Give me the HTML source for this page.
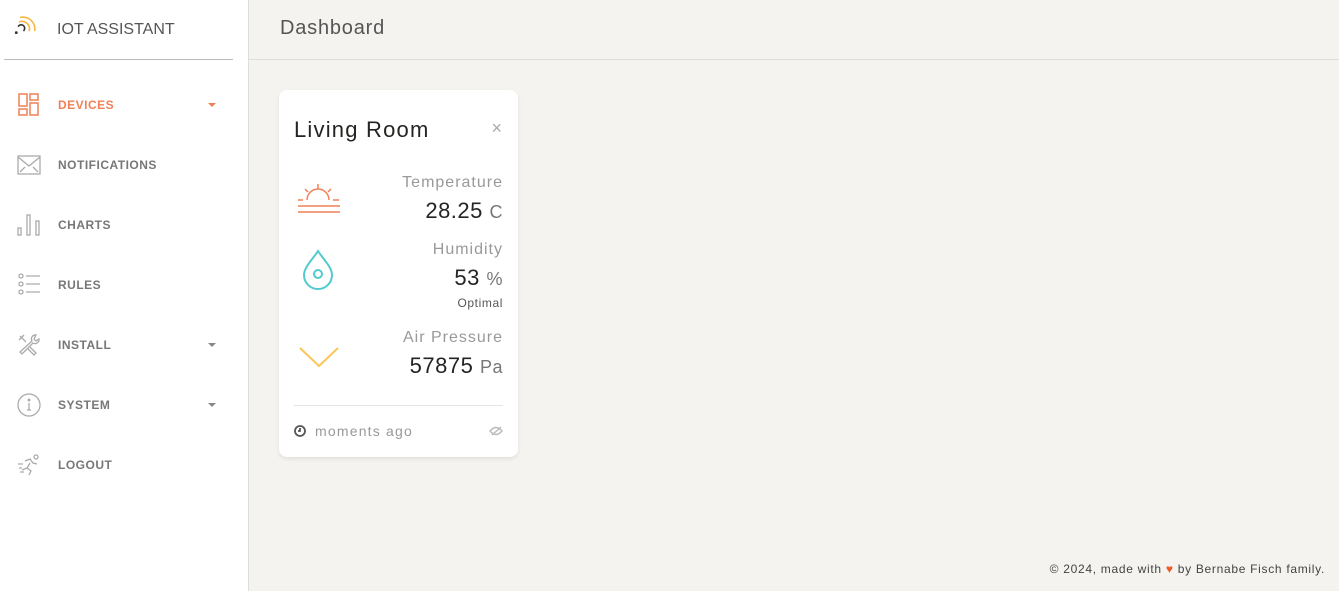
<!DOCTYPE html>
<html><head><meta charset="utf-8"><style>
*{margin:0;padding:0;box-sizing:border-box}
body{width:1339px;height:591px;background:#f4f3ef;font-family:"Liberation Sans",sans-serif;position:relative;overflow:hidden}
.side{position:absolute;left:0;top:0;width:249px;height:591px;background:#fff;border-right:1px solid #ddd}
.logo{position:absolute;left:57px;top:21px;font-size:16px;color:#555}
.hr{position:absolute;left:4px;top:59px;width:229px;height:1px;background:#bbb}
.item{position:absolute;left:16px;height:30px;width:220px}
.item svg{position:absolute;left:0;top:0}
.item span{position:absolute;left:42px;top:6px;font-size:12px;font-weight:bold;color:#777;letter-spacing:.5px}
.item .car{position:absolute;left:192px;top:11px;width:0;height:0;border-left:4px solid transparent;border-right:4px solid transparent;border-top:4px solid #888}
.top{position:absolute;left:249px;top:0;right:0;height:60px;border-bottom:1px solid #ddd}
.top h1{position:absolute;left:31px;top:17px;font-size:20px;font-weight:normal;color:#555;letter-spacing:.8px}
.card{position:absolute;left:279px;top:90px;width:239px;height:367px;background:#fff;border-radius:8px;box-shadow:0 2px 4px rgba(0,0,0,.08)}
.r{position:absolute;right:15px;text-align:right}
.lbl{font-size:16px;color:#999;letter-spacing:1px}
.val{font-size:22px;color:#252422;letter-spacing:.5px}
.val small{font-size:18px;color:#777}
.foot{position:absolute;right:14px;top:562px;font-size:12px;color:#444;letter-spacing:.7px}
</style></head><body>
<div class="side">
<svg style="position:absolute;left:13px;top:13px" width="24" height="24" viewBox="0 0 22 22" fill="none" stroke-linecap="round"><path d="M7 4a11 11 0 0 1 13 12" stroke="#f3bb45" stroke-width="1.5"/><path d="M6 8a7 7 0 0 1 9 8" stroke="#f3bb45" stroke-width="1.5"/><path d="M5 12a3 3 0 0 1 5 4" stroke="#333" stroke-width="1.5"/><circle cx="3" cy="18" r="1.3" fill="#333"/></svg>
<div class="logo">IOT ASSISTANT</div>
<div class="hr"></div>
<div class="item" style="top:92px"><svg width="26" height="26" fill="none" stroke="#ef8157" stroke-width="1.5"><rect x="3" y="2" width="8" height="12"/><rect x="14" y="2" width="8" height="6"/><rect x="3" y="17" width="8" height="6"/><rect x="14" y="11" width="8" height="12"/></svg><span style="color:#ef8157">DEVICES</span><i class="car" style="border-top-color:#ef8157"></i></div>
<div class="item" style="top:152px"><svg width="26" height="26" fill="none" stroke="#aaa" stroke-width="1.3"><rect x="2" y="4" width="22" height="18"/><path d="M2 5l11 9 11-9M4 20l5-5M22 20l-5-5"/></svg><span>NOTIFICATIONS</span></div>
<div class="item" style="top:212px"><svg width="26" height="26" fill="none" stroke="#aaa" stroke-width="1.3"><rect x="2" y="16" width="3" height="7"/><rect x="11" y="3" width="3" height="20"/><rect x="20" y="9" width="3" height="14"/></svg><span>CHARTS</span></div>
<div class="item" style="top:272px"><svg width="26" height="26" fill="none" stroke="#aaa" stroke-width="1.3"><circle cx="5" cy="4" r="2"/><circle cx="5" cy="12" r="2"/><circle cx="5" cy="20" r="2"/><path d="M10 4h14M10 12h14M10 20h14"/></svg><span>RULES</span></div>
<div class="item" style="top:332px"><svg width="26" height="26" fill="none" stroke="#aaa" stroke-width="1.3"><path d="M4 4l6 6M3 8l5-5M20 3a4 4 0 0 0-4 6L4 20l2 2 11-11a4 4 0 0 0 6-4l-3 2-2-2z"/><path d="M14 15l6 6-2 2-6-6"/></svg><span>INSTALL</span><i class="car"></i></div>
<div class="item" style="top:392px"><svg width="26" height="26" fill="none" stroke="#aaa" stroke-width="1.3"><circle cx="13" cy="13" r="11"/><path d="M13 11v7M11 18h4"/><circle cx="13" cy="8" r=".8" fill="#aaa"/></svg><span>SYSTEM</span><i class="car"></i></div>
<div class="item" style="top:452px"><svg width="26" height="26" fill="none" stroke="#aaa" stroke-width="1.3"><circle cx="20" cy="5" r="2"/><path d="M9 9l5-2 3 4 4 1M14 11l-3 5 4 3-2 4M11 16l-5 2M2 12h5M3 16h3M4 20h4"/></svg><span>LOGOUT</span></div>
</div>
<div class="top"><h1>Dashboard</h1></div>
<div class="card">
<div style="position:absolute;left:15px;top:27px;font-size:22px;color:#252422;letter-spacing:1.2px">Living Room</div>
<div style="position:absolute;right:16px;top:28px;font-size:18px;color:#aaa">×</div>
<svg style="position:absolute;left:18px;top:94px" width="44" height="36" fill="none" stroke="#ef8157" stroke-width="1.5"><path d="M10 16a11 11 0 0 1 22 0M21 0v5M8 5l3 3M34 5l-3 3M1 16h5M36 16h6M1 22h42M1 28h42"/></svg>
<div class="r lbl" style="top:84px">Temperature</div>
<div class="r val" style="top:108px">28.25 <small>C</small></div>
<svg style="position:absolute;left:22px;top:159px" width="34" height="42" fill="none" stroke="#51cbce" stroke-width="2"><path d="M17 2C12 10 3 18 3 26a14 14 0 0 0 28 0C31 18 22 10 17 2z"/><circle cx="17" cy="25" r="4"/></svg>
<div class="r lbl" style="top:151px">Humidity</div>
<div class="r val" style="top:175px">53 <small>%</small></div>
<div class="r" style="top:206px;font-size:12px;color:#555;letter-spacing:.6px">Optimal</div>
<svg style="position:absolute;left:20px;top:256px" width="40" height="22" fill="none" stroke="#fbc658" stroke-width="2"><path d="M1 2l19 18L39 2"/></svg>
<div class="r lbl" style="top:239px">Air Pressure</div>
<div class="r val" style="top:263px">57875 <small>Pa</small></div>
<div style="position:absolute;left:15px;right:15px;top:315px;height:1px;background:#e5e5e5"></div>
<svg style="position:absolute;left:15px;top:335px" width="12" height="12" fill="none" stroke="#555" stroke-width="1.8"><circle cx="6" cy="6" r="5"/><path d="M6 3v3H4"/></svg>
<div style="position:absolute;left:36px;top:333px;font-size:14px;color:#999;letter-spacing:1.2px">moments ago</div>
<svg style="position:absolute;right:15px;top:336px" width="14" height="10" fill="none" stroke="#bbb" stroke-width="1.4"><path d="M1 5q6-7 12 0q-6 7-12 0z"/><path d="M3 9l9-8"/></svg>
</div>
<div class="foot">© 2024, made with <span style="color:#ef5a24">♥</span> by Bernabe Fisch family.</div>
</body></html>
